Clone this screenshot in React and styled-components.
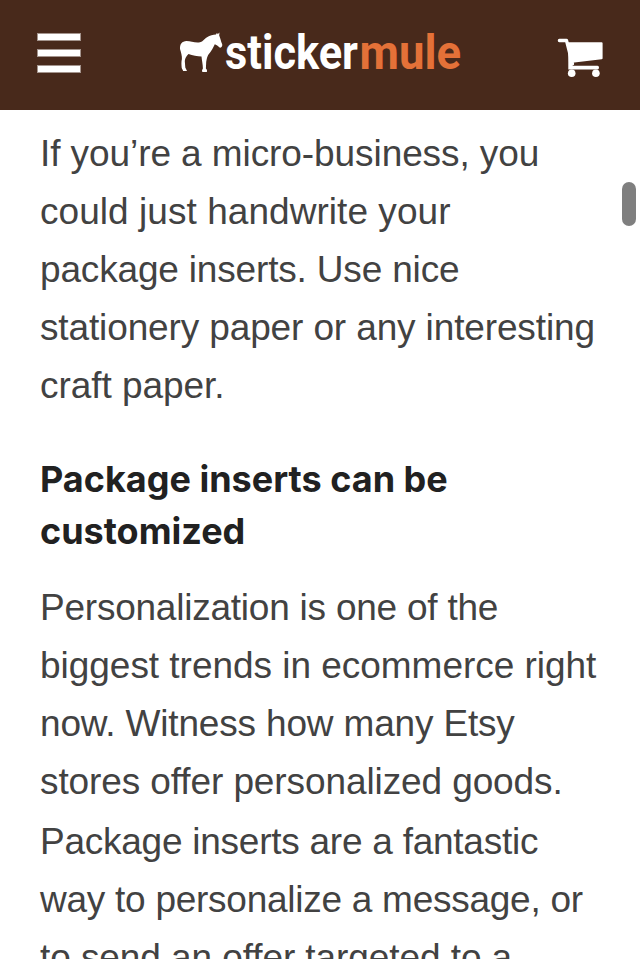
import React from 'react';
import styled, { createGlobalStyle } from 'styled-components';

const GlobalStyle = createGlobalStyle`
  * { box-sizing: border-box; }
  body { margin: 0; background: #fff; }
`;

const Page = styled.div`
  position: relative;
  display: flex;
  flex-direction: column;
  width: 640px;
  height: 959px;
  overflow: hidden;
  background: #fff;
`;

const Header = styled.header`
  display: flex;
  align-items: flex-start;
  flex: 0 0 110px;
  padding: 0 37px;
  background: #48291b;
`;

const MenuButton = styled.button`
  display: flex;
  flex-direction: column;
  gap: 8px;
  width: 44px;
  margin: 33px 98px 0 0;
  padding: 0;
  border: 0;
  background: none;
`;

const MenuBar = styled.span`
  height: 8px;
  background: #fff;
  border: 1px solid #a4948d;
  border-width: 1px 1px 1px 1px;
`;

const Logo = styled.a`
  display: block;
  height: 60px;
  margin: 25px 0 0;
`;

const Drawing = styled.svg`
  display: block;
  overflow: visible;
`;

const Wordmark = styled.text`
  font: 700 48.5px Roboto, sans-serif;
  fill: ${({ $color }) => $color};
`;

const CartButton = styled.button`
  margin: 34px 0 0 auto;
  padding: 0;
  border: 0;
  background: none;
`;

const Article = styled.main`
  display: flex;
  flex-direction: column;
  padding: 15px 0 0 40px;
`;

const Paragraph = styled.p`
  margin: 0;
  color: #424242;
  font: 37px/58px "Liberation Sans", Arial, sans-serif;
`;

const Line = styled.span`
  display: block;
  white-space: nowrap;
  letter-spacing: ${({ $spacing }) => $spacing}px;
  margin-top: ${({ $offset = 0 }) => $offset}px;
`;

const Heading = styled.h3`
  width: 440px;
  margin: 38px 0 22px;
  color: #212121;
  font: 700 36px/52px Inter, sans-serif;
`;

const ScrollThumb = styled.div`
  position: absolute;
  top: 182px;
  right: 4px;
  width: 14px;
  height: 44px;
  border-radius: 7px;
  background: #7f7f7f;
`;

const intro = [
  ['If you’re a micro-business, you', -0.08],
  ['could just handwrite your', 0.05],
  ['package inserts. Use nice', -0.17],
  ['stationery paper or any interesting', -0.13],
  ['craft paper.', -0.05],
];

const personalization = [
  ['Personalization is one of the', -0.23],
  ['biggest trends in ecommerce right', -0.03],
  ['now. Witness how many Etsy', -0.17],
  ['stores offer personalized goods.', -0.1],
  ['Package inserts are a fantastic', -0.25, 2],
  ['way to personalize a message, or', -0.26],
  ['to send an offer targeted to a', -0.08],
];

function TextBlock({ lines }) {
  return (
    <Paragraph>
      {lines.map(([text, spacing, offset]) => (
        <Line key={text} $spacing={spacing} $offset={offset}>{text} </Line>
      ))}
    </Paragraph>
  );
}

function MuleLogo() {
  return (
    <Drawing width="284" height="60" viewBox="179 25 284 60" aria-label="stickermule">
      <path
        fill="#fff"
        d="M180 49C179.800 44 182 41.200 186.500 41C191 41 195 43.200 200 42.300C203 41.600 204.500 38.800 207 37.300C210 35.400 213 34.500 216 34.500L217 32.800L217.700 34.200L219.500 32.600L219.200 35.500C220.300 38 220.800 41 222.200 44.300C222.500 46 221.800 47.200 220.300 47.800C218.800 47.500 218 45.300 214.800 44.300C213.500 47 211.500 51.500 208.300 54.800C207.300 56.500 206.700 59 206.200 62L205.900 68.500L207 70L206.900 72H202.300L202 70.300L202.900 68.500C202.800 64 201.800 60 201.500 56.500C197.500 56.500 192.500 55.500 188.500 54C186.500 56 185 58 184.800 61L185.300 67.500L187 71H183.200L181.700 68C181.400 64.500 181.200 62 181.900 59C182.200 56 181 52.500 180 49Z"
      />
      <Wordmark x="225" y="69" textLength="133" lengthAdjust="spacingAndGlyphs" $color="#fff">sticker</Wordmark>
      <Wordmark x="359.500" y="69" textLength="101.500" lengthAdjust="spacingAndGlyphs" $color="#e47138">mule</Wordmark>
    </Drawing>
  );
}

function Cart() {
  return (
    <Drawing width="45" height="45" viewBox="558 34 45 45" fill="#fff">
      <path d="M559.400 40.500H566.500L572.500 64" fill="none" stroke="#fff" strokeWidth="3.300" strokeLinecap="round" strokeLinejoin="round" />
      <path d="M568 42.300H601.600Q602.600 42.300 602.600 43.300V58.200Q602.600 59.200 601.600 59.300L572.300 62.800V65.700H597.500Q599 65.700 599 67.500Q599 69.400 597.500 69.400H568.300V63Z" />
      <circle cx="571.700" cy="73.200" r="3.800" />
      <circle cx="595.900" cy="73.200" r="3.800" />
    </Drawing>
  );
}

export default function App() {
  return (
    <Page>
      <GlobalStyle />
      <Header>
        <MenuButton aria-label="Menu">
          <MenuBar />
          <MenuBar />
          <MenuBar />
        </MenuButton>
        <Logo>
          <MuleLogo />
        </Logo>
        <CartButton aria-label="Cart">
          <Cart />
        </CartButton>
      </Header>
      <Article>
        <TextBlock lines={intro} />
        <Heading>Package inserts can be customized</Heading>
        <TextBlock lines={personalization} />
      </Article>
      <ScrollThumb />
    </Page>
  );
}
